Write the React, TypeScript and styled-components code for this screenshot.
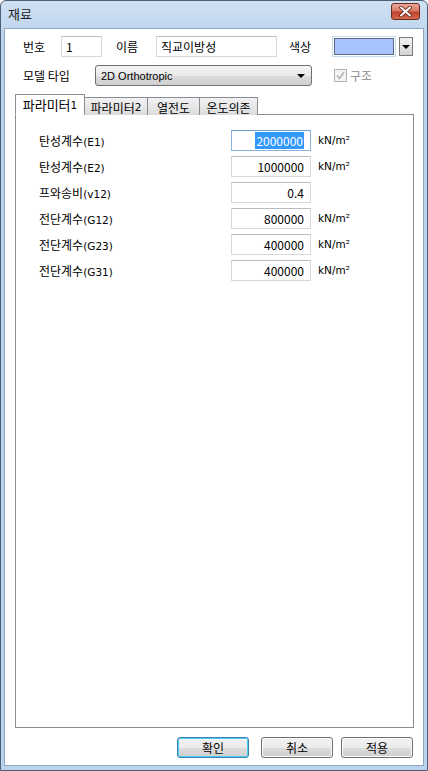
import React from "react";
import styled, { createGlobalStyle } from "styled-components";

const GlobalStyle = createGlobalStyle`
  html, body { margin: 0; padding: 0; background: #fff; }
  body { font-family: "Liberation Sans", "Noto Sans CJK KR", sans-serif; font-size: 12px; color: #000; }
`;

const Window = styled.div`
  width: 428px;
  height: 771px;
  box-sizing: border-box;
  display: flex;
  flex-direction: column;
  background: linear-gradient(#cfe0f3, #bcd3ec 40px);
  border: 1px solid #4a5f78;
  border-radius: 6px 6px 0 0;
  padding: 0 3px 4px 3px;
`;

const TitleBar = styled.div`
  height: 27px;
  display: flex;
  align-items: center;
  justify-content: space-between;
  padding: 0 4px 0 4px;
`;

const Title = styled.span`
  font-family: "Noto Sans CJK KR", sans-serif;
  font-size: 13px;
  color: #1e1e1e;
  margin-top: -2px;
`;

const CloseButton = styled.div`
  width: 29px;
  height: 17px;
  margin-top: -6px;
  box-sizing: border-box;
  border: 1px solid #6d2a22;
  border-radius: 3px;
  background: linear-gradient(#e9a99c, #d77a66 45%, #c0432c 55%, #d06a4f);
  display: flex;
  align-items: center;
  justify-content: center;
`;

const Client = styled.div`
  flex: 1;
  background: #fff;
  border: 1px solid #8ca5c2;
  display: flex;
  flex-direction: column;
  padding: 7px 10px 0 10px;
`;

const Row = styled.div<{ gap?: number }>`
  display: flex;
  align-items: center;
  height: 21px;
  margin-bottom: ${(p) => p.gap ?? 0}px;
`;

const Label = styled.span<{ w: number; ml?: number; muted?: boolean }>`
  font-family: "Noto Sans CJK KR", sans-serif;
  font-size: 12px;
  width: ${(p) => p.w}px;
  margin-left: ${(p) => p.ml ?? 0}px;
  color: ${(p) => (p.muted ? "#8d8d8d" : "#000")};
  white-space: nowrap;
  flex-shrink: 0;
`;

const TextBox = styled.div<{ w: number; focused?: boolean; right?: boolean }>`
  width: ${(p) => p.w}px;
  height: 21px;
  box-sizing: border-box;
  border: 1px solid ${(p) => (p.focused ? "#88b2dc" : "#d5d9de")};
  border-top-color: ${(p) => (p.focused ? "#6d9fd2" : "#b9bcc0")};
  background: #fff;
  display: flex;
  align-items: center;
  justify-content: ${(p) => (p.right ? "flex-end" : "flex-start")};
  padding: 0 6px 0 4px;
  font-family: "Noto Sans CJK KR", sans-serif;
  font-size: 12px;
  flex-shrink: 0;
`;

const Selected = styled.span`
  background: #3399ff;
  color: #fff;
  padding: 0 1px;
`;

const ColorWell = styled.div`
  width: 64px;
  height: 21px;
  box-sizing: border-box;
  border: 1px solid #c4dcf3;
  padding: 1px;
  display: flex;
`;

const ColorFill = styled.div`
  flex: 1;
  background: #a5c3ff;
  border: 1px solid #5f6a78;
`;

const DropButton = styled.div`
  width: 14px;
  height: 19px;
  margin-left: 3px;
  box-sizing: border-box;
  border: 1px solid #7a7a7a;
  background: linear-gradient(#f2f2f2, #d4d4d4);
  display: flex;
  align-items: center;
  justify-content: center;
`;

const Arrow = styled.div`
  width: 0;
  height: 0;
  border-left: 4px solid transparent;
  border-right: 4px solid transparent;
  border-top: 4px solid #000;
`;

const Combo = styled.div`
  width: 217px;
  height: 21px;
  box-sizing: border-box;
  border: 1px solid #707070;
  border-radius: 3px;
  background: linear-gradient(#f3f3f3 0%, #ebebeb 50%, #dddddd 51%, #cfcfcf 100%);
  display: flex;
  align-items: center;
  justify-content: space-between;
  padding: 0 6px 0 5px;
  font-size: 11px;
  flex-shrink: 0;
`;

const CheckWrap = styled.div`
  display: flex;
  align-items: center;
  margin-left: 22px;
  gap: 3px;
`;

const CheckBox = styled.div`
  width: 13px;
  height: 13px;
  box-sizing: border-box;
  border: 1px solid #b1b1b1;
  background: #f4f4f4;
  display: flex;
  align-items: center;
  justify-content: center;
`;

const Tabs = styled.div`
  display: flex;
  align-items: flex-end;
  margin-top: 8px;
  height: 21px;
  position: relative;
  z-index: 1;
`;

const Tab = styled.div<{ active?: boolean; w: number }>`
  width: ${(p) => p.w}px;
  height: ${(p) => (p.active ? 21 : 18)}px;
  box-sizing: border-box;
  border: 1px solid #898c95;
  border-bottom: ${(p) => (p.active ? "1px solid #fff" : "none")};
  background: ${(p) => (p.active ? "#fff" : "linear-gradient(#f2f2f2, #dcdcdc)")};
  margin-right: -1px;
  display: flex;
  align-items: center;
  justify-content: center;
  font-family: "Noto Sans CJK KR", sans-serif;
  font-size: ${(p) => (p.active ? 13 : 12)}px;
  padding-top: ${(p) => (p.active ? 0 : 1)}px;
`;

const Small = styled.span`
  font-family: "DejaVu Sans", sans-serif;
  font-size: 10.5px;
`;

const Panel = styled.div`
  height: 614px;
  box-sizing: border-box;
  border: 1px solid #898c95;
  margin-top: -1px;
  width: 399px;
  padding: 14px 0 0 23px;
  display: flex;
  flex-direction: column;
  gap: 4px;
`;

const FieldRow = styled.div`
  display: flex;
  align-items: center;
  height: 22px;
`;

const FieldLabel = styled.span`
  width: 192px;
  font-family: "Noto Sans CJK KR", sans-serif;
  font-size: 12px;
`;

const Unit = styled.span`
  margin-left: 7px;
  font-family: "DejaVu Sans", sans-serif;
  font-size: 10.5px;
`;

const Buttons = styled.div`
  display: flex;
  justify-content: flex-end;
  margin-top: 9px;
`;

const Button = styled.div<{ primary?: boolean; mr?: number }>`
  width: 72px;
  height: 21px;
  margin-right: ${(p) => p.mr ?? 0}px;
  box-sizing: border-box;
  border: 1px solid ${(p) => (p.primary ? "#3c7fb1" : "#707070")};
  box-shadow: ${(p) => (p.primary ? "inset 0 0 0 1px #48d1f5" : "inset 0 0 0 1px #fbfbfb")};
  border-radius: 3px;
  background: linear-gradient(#f2f2f2 0%, #ebebeb 50%, #dddddd 51%, #cfcfcf 100%);
  display: flex;
  align-items: center;
  justify-content: center;
  font-family: "Noto Sans CJK KR", sans-serif;
  font-size: 12px;
`;

const fields = [
  { name: "탄성계수", sym: "(E1)", value: "2000000", unit: true, focused: true },
  { name: "탄성계수", sym: "(E2)", value: "1000000", unit: true },
  { name: "프와송비", sym: "(v12)", value: "0.4", unit: false },
  { name: "전단계수", sym: "(G12)", value: "800000", unit: true },
  { name: "전단계수", sym: "(G23)", value: "400000", unit: true },
  { name: "전단계수", sym: "(G31)", value: "400000", unit: true },
];

export default function App() {
  return (
    <>
      <GlobalStyle />
      <Window>
        <TitleBar>
          <Title>재료</Title>
          <CloseButton>
            <svg width="13" height="11" viewBox="0 0 13 11">
              <path d="M2 1.5 L11 9.5 M11 1.5 L2 9.5" stroke="#5a1a10" strokeWidth="3.6" strokeLinecap="round" />
              <path d="M2 1.5 L11 9.5 M11 1.5 L2 9.5" stroke="#fff" strokeWidth="2" strokeLinecap="round" />
            </svg>
          </CloseButton>
        </TitleBar>
        <Client>
          <Row gap={8}>
            <Label w={38} ml={8}>번호</Label>
            <TextBox w={41}>1</TextBox>
            <Label w={40} ml={14}>이름</Label>
            <TextBox w={121}>직교이방성</TextBox>
            <Label w={43} ml={12}>색상</Label>
            <ColorWell>
              <ColorFill />
            </ColorWell>
            <DropButton>
              <Arrow />
            </DropButton>
          </Row>
          <Row>
            <Label w={72} ml={8}>모델 타입</Label>
            <Combo>
              <span>2D Orthotropic</span>
              <Arrow />
            </Combo>
            <CheckWrap>
              <CheckBox>
                <svg width="9" height="9" viewBox="0 0 9 9">
                  <path d="M1 4.5 L3.5 7.5 L8 1" stroke="#b0b0b0" strokeWidth="1.5" fill="none" />
                </svg>
              </CheckBox>
              <Label w={30} muted>구조</Label>
            </CheckWrap>
          </Row>
          <Tabs>
            <Tab active w={70}>
              파라미터<Small>1</Small>
            </Tab>
            <Tab w={64}>
              파라미터<Small>2</Small>
            </Tab>
            <Tab w={53}>열전도</Tab>
            <Tab w={59}>온도의존</Tab>
          </Tabs>
          <Panel>
            {fields.map((f) => (
              <FieldRow key={f.sym}>
                <FieldLabel>
                  {f.name}
                  <Small>{f.sym}</Small>
                </FieldLabel>
                <TextBox w={80} right focused={f.focused}>
                  {f.focused ? <Selected>{f.value}</Selected> : f.value}
                </TextBox>
                {f.unit && <Unit>kN/m²</Unit>}
              </FieldRow>
            ))}
          </Panel>
          <Buttons>
            <Button primary mr={12}>확인</Button>
            <Button mr={8}>취소</Button>
            <Button>적용</Button>
          </Buttons>
        </Client>
      </Window>
    </>
  );
}
